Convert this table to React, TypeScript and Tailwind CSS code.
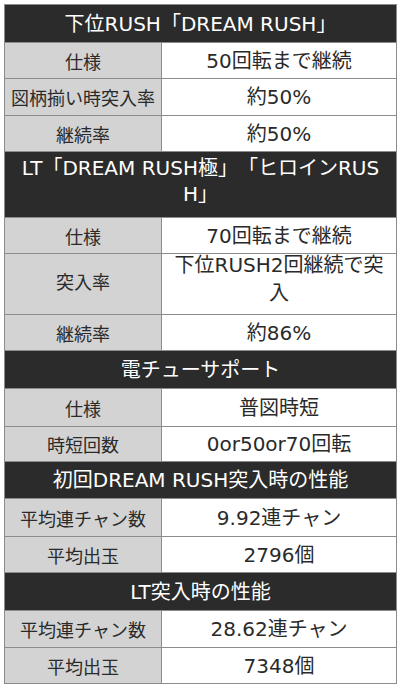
import React from "react";

type Row =
  | { kind: "h"; text: React.ReactNode; h: string; tall?: boolean }
  | { kind: "r"; label: string; value: React.ReactNode; h: string; tall?: boolean };

const rows: Row[] = [
  { kind: "h", text: "下位RUSH「DREAM RUSH」", h: "h-[37px]" },
  { kind: "r", label: "仕様", value: "50回転まで継続", h: "h-[36px]" },
  { kind: "r", label: "図柄揃い時突入率", value: "約50%", h: "h-[37px]" },
  { kind: "r", label: "継続率", value: "約50%", h: "h-[36px]" },
  {
    kind: "h",
    tall: true,
    h: "h-[66px]",
    text: (
      <>
        LT「DREAM RUSH極」「ヒロインRUS
        <br />
        H」
      </>
    ),
  },
  { kind: "r", label: "仕様", value: "70回転まで継続", h: "h-[36px]" },
  {
    kind: "r",
    label: "突入率",
    h: "h-[61px]",
    tall: true,
    value: (
      <>
        下位RUSH2回継続で突
        <br />入
      </>
    ),
  },
  { kind: "r", label: "継続率", value: "約86%", h: "h-[36px]" },
  { kind: "h", text: "電チューサポート", h: "h-[38px]" },
  { kind: "r", label: "仕様", value: "普図時短", h: "h-[38px]" },
  { kind: "r", label: "時短回数", value: "0or50or70回転", h: "h-[35px]" },
  { kind: "h", text: "初回DREAM RUSH突入時の性能", h: "h-[37px]" },
  { kind: "r", label: "平均連チャン数", value: "9.92連チャン", h: "h-[38px]" },
  { kind: "r", label: "平均出玉", value: "2796個", h: "h-[36px]" },
  { kind: "h", text: "LT突入時の性能", h: "h-[38px]" },
  { kind: "r", label: "平均連チャン数", value: "28.62連チャン", h: "h-[37px]" },
  { kind: "r", label: "平均出玉", value: "7348個", h: "h-[36px]" },
];

const font = '"DejaVu Sans", "Noto Sans CJK JP", sans-serif';

export default function App() {
  return (
    <div
      className="w-[400px] h-[694px] bg-white pt-[4px] pl-[4px] [text-spacing-trim:space-all]"
      style={{ fontFamily: font }}
    >
      <div className="w-[393px] border border-[#8c8c8c] text-[#2a2a2a]">
        {rows.map((r, i) =>
          r.kind === "h" ? (
            <div
              key={i}
              className={`bg-[#2b2b2b] text-white text-center px-[4px] flex flex-col items-center justify-center text-[20px] ${r.h} ${
                i > 0 ? "border-t border-[#8c8c8c]" : ""
              }`}
            >
              <div
                className={
                  r.tall ? "leading-[26px] -mt-[8px]" : "leading-[26px]"
                }
              >
                {r.text}
              </div>
            </div>
          ) : (
            <div key={i} className={`flex border-t border-[#8c8c8c] ${r.h}`}>
              <div
                className="w-[157px] shrink-0 bg-[#d3d3d3] border-r border-[#8c8c8c] flex items-center justify-center text-[18px] leading-[26px]"
                style={{ fontFamily: '"Noto Sans CJK JP", sans-serif' }}
              >
                <div className={r.tall ? "-mt-[6px]" : ""}>{r.label}</div>
              </div>
              <div className="flex-1 bg-white flex items-center justify-center text-center text-[20px] leading-[28px]">
                <div className={r.tall ? "-mt-[10px]" : ""}>{r.value}</div>
              </div>
            </div>
          )
        )}
      </div>
    </div>
  );
}
